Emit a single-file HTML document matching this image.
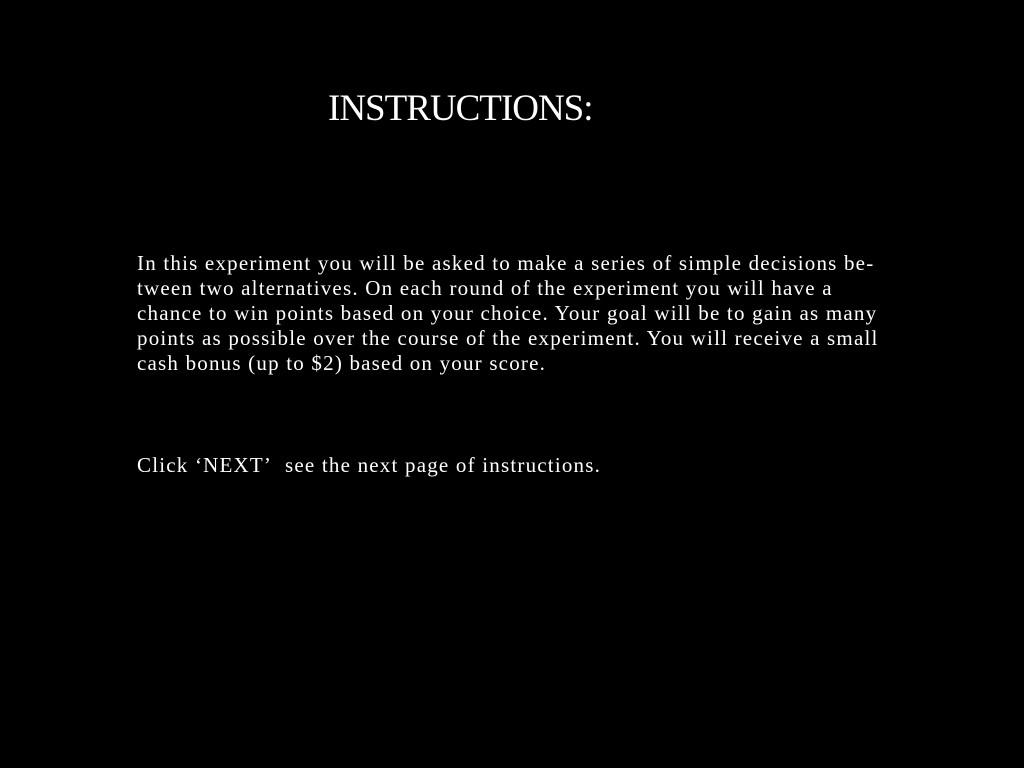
<!DOCTYPE html>
<html><head><meta charset="utf-8"><style>
html,body{margin:0;padding:0;background:#000;width:1024px;height:768px;overflow:hidden}
body{position:relative;color:#fff;font-family:"Liberation Serif",serif}
.t{position:absolute;left:328px;top:87px;font-size:37px;white-space:nowrap;letter-spacing:-1px}
.l{position:absolute;left:137px;font-size:21px;white-space:nowrap;letter-spacing:1.2px}
</style></head><body>
<div class="t">INSTRUCTIONS:</div>
<div class="l" style="top:251px">In this experiment you will be asked to make a series of simple decisions be-</div>
<div class="l" style="top:276px">tween two alternatives. On each round of the experiment you will have a</div>
<div class="l" style="top:301px">chance to win points based on your choice. Your goal will be to gain as many</div>
<div class="l" style="top:326px">points as possible over the course of the experiment. You will receive a small</div>
<div class="l" style="top:351px">cash bonus (up to $2) based on your score.</div>
<div class="l" style="top:453px">Click ‘NEXT’&nbsp; see the next page of instructions.</div>
</body></html>
